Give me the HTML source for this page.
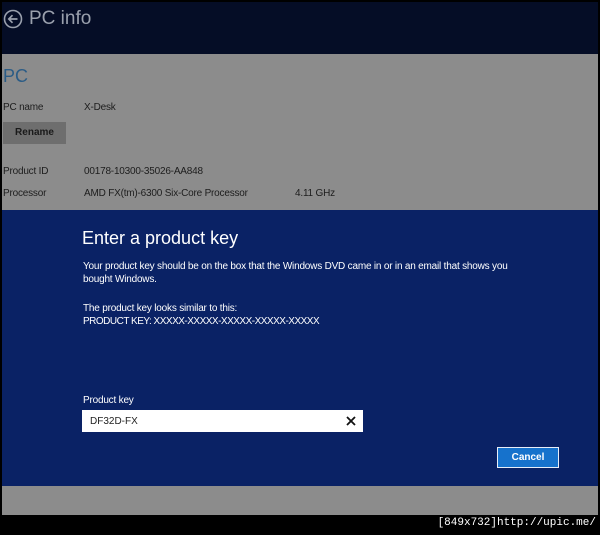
<!DOCTYPE html>
<html><head><style>
*{margin:0;padding:0;box-sizing:border-box}
body{width:600px;height:535px;background:#000;position:relative;overflow:hidden;font-family:"Liberation Sans",sans-serif}
.a{position:absolute;white-space:nowrap}
.s{font-size:10px;color:#1d1d1d;letter-spacing:-0.2px}
.w{font-size:10px;color:#fff;letter-spacing:-0.2px}
</style></head><body>
<div class="a" style="left:2px;top:2px;width:596px;height:52px;background:#050d26"></div>
<div class="a" style="left:2px;top:54px;width:596px;height:156px;background:#8c8c8c"></div>
<div class="a" style="left:2px;top:210px;width:596px;height:276px;background:#0a2265"></div>
<div class="a" style="left:2px;top:486px;width:596px;height:29px;background:#8c8c8c"></div>
<svg class="a" style="left:3px;top:9px" width="20" height="20" viewBox="0 0 20 20"><circle cx="10" cy="10" r="8.5" fill="none" stroke="#9aa0ad" stroke-width="1.6"/><path d="M14.5 10H6M9.5 6.2L5.8 10l3.7 3.8" fill="none" stroke="#9aa0ad" stroke-width="1.7"/></svg>
<div class="a" style="left:29px;top:8px;font-size:19px;color:#9aa0ad">PC info</div>
<div class="a" style="left:3px;top:66px;font-size:18px;color:#2b5c86">PC</div>
<div class="a s" style="left:3px;top:102px">PC name</div>
<div class="a s" style="left:84px;top:102px">X-Desk</div>
<div class="a" style="left:3px;top:122px;width:63px;height:22px;background:#6e6e6e;color:#1a1a1a;font-size:10px;font-weight:bold;text-align:center;line-height:22px">Rename</div>
<div class="a s" style="left:3px;top:166px">Product ID</div>
<div class="a s" style="left:84px;top:166px">00178-10300-35026-AA848</div>
<div class="a s" style="left:3px;top:188px">Processor</div>
<div class="a s" style="left:84px;top:188px">AMD FX(tm)-6300 Six-Core Processor</div>
<div class="a s" style="left:295px;top:188px">4.11 GHz</div>
<div class="a" style="left:82px;top:228px;font-size:18px;color:#fff">Enter a product key</div>
<div class="a w" style="left:83px;top:260px;line-height:13px">Your product key should be on the box that the Windows DVD came in or in an email that shows you<br>bought Windows.</div>
<div class="a w" style="left:83px;top:302px;line-height:13px">The product key looks similar to this:<br><span style="letter-spacing:-0.5px">PRODUCT KEY: XXXXX-XXXXX-XXXXX-XXXXX-XXXXX</span></div>
<div class="a w" style="left:83px;top:395px">Product key</div>
<div class="a" style="left:82px;top:410px;width:281px;height:22px;background:#fff"></div>
<div class="a" style="left:90px;top:416px;font-size:10px;color:#222">DF32D-FX</div>
<svg class="a" style="left:346px;top:416px" width="10" height="10" viewBox="0 0 10 10"><path d="M1 1L9 9M9 1L1 9" stroke="#111" stroke-width="1.8"/></svg>
<div class="a" style="left:497px;top:447px;width:62px;height:21px;background:#1672cc;border:1.5px solid #e8eef8;color:#fff;font-size:10px;font-weight:bold;text-align:center;line-height:19px">Cancel</div>
<div class="a" style="right:4px;top:517px;font-family:'Liberation Mono',monospace;font-size:11px;color:#fff">[849x732]http://upic.me/</div>
</body></html>
